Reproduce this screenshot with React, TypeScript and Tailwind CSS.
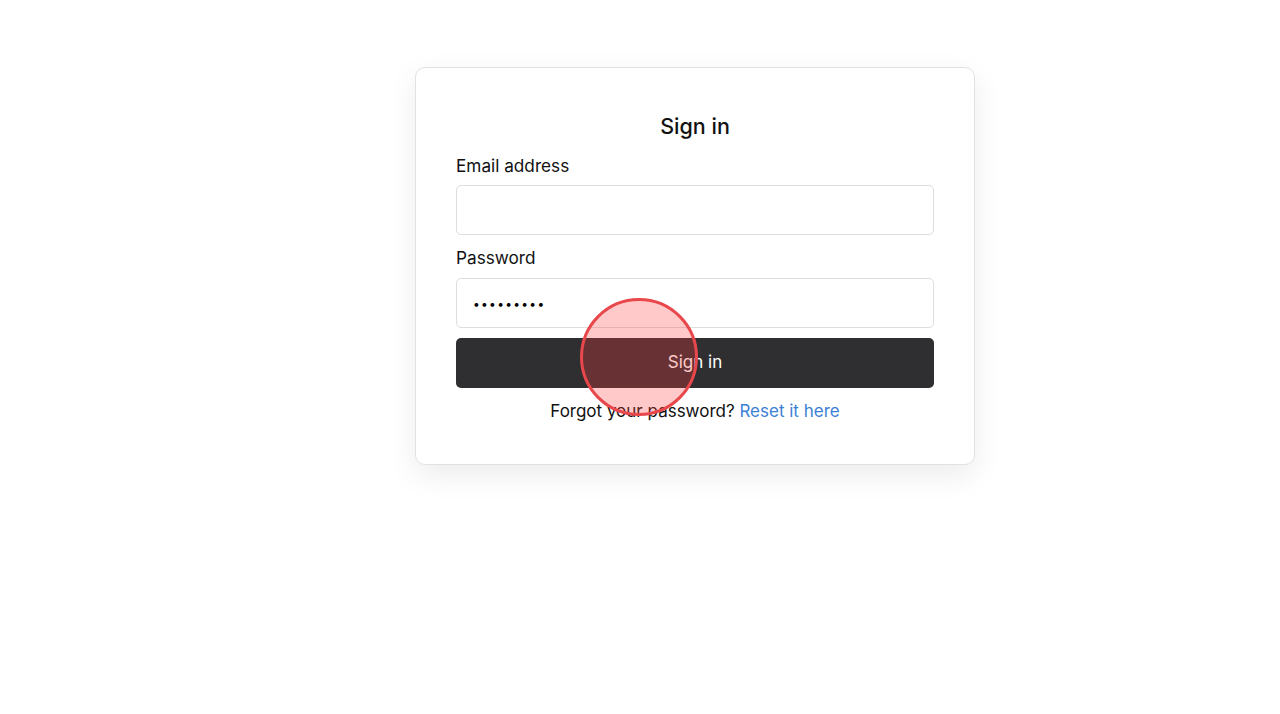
import React from "react";

export default function App() {
  return (
    <div
      className="relative min-h-[714px] w-full bg-white"
      style={{ fontFamily: "Inter, 'Noto Sans', sans-serif" }}
    >
      <div className="flex justify-center pt-[67px] pl-[110px]">
        <div className="w-[560px] rounded-[10px] border border-[#e2e2e2] bg-white px-[40px] pt-[44px] pb-[41px] shadow-[0_10px_30px_rgba(0,0,0,0.08)]">
          <h1 className="text-center text-[21.5px] font-medium leading-[28px] text-[#111]">
            Sign in
          </h1>
          <div className="mt-[14px]">
            <label className="block text-[17.2px] leading-[24px] text-[#111]">Email address</label>
            <input
              type="email"
              className="mt-[7px] block h-[50px] w-full rounded-[5px] border border-[#dedede] bg-white px-[16px] text-[16px] outline-none"
            />
          </div>
          <div className="mt-[11px]">
            <label className="block text-[17.2px] leading-[24px] text-[#111]">Password</label>
            <input
              type="password"
              readOnly
              defaultValue="123456789"
              className="mt-[8px] block h-[50px] w-full rounded-[5px] border border-[#dedede] bg-white px-[16px] text-[12px] tracking-[1.3px] text-black outline-none"
            />
          </div>
          <button className="mt-[10px] block h-[50px] w-full rounded-[5px] bg-[#2f2f31] text-[17px] text-white">
            Sign in
          </button>
          <p className="mt-[11px] text-center text-[17px] leading-[24px] text-[#111]">
            Forgot your password? <a className="text-[#3b82d6]">Reset it here</a>
          </p>
        </div>
      </div>
      <div className="pointer-events-none absolute left-[580px] top-[298px] h-[118px] w-[118px] rounded-full border-[3px] border-[#e8474b] bg-[rgba(255,60,60,0.28)]" />
    </div>
  );
}
